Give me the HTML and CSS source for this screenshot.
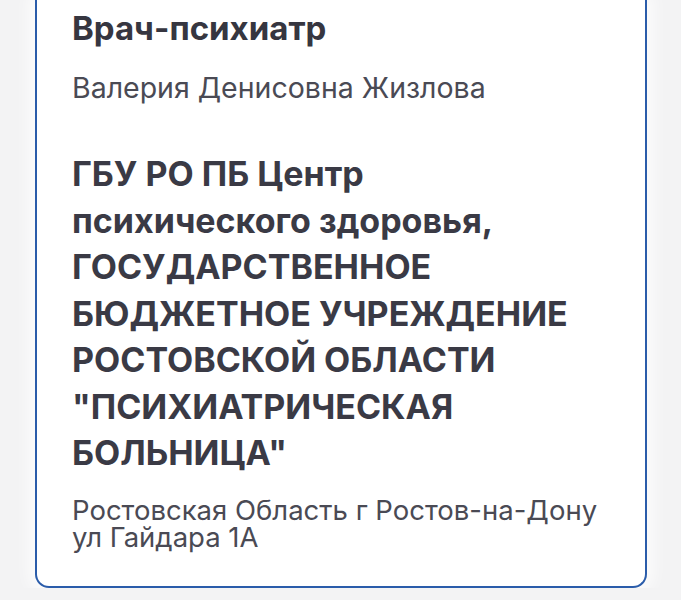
FILE: index.html
```html
<!DOCTYPE html>
<html lang="ru">
<head>
<meta charset="utf-8">
<link rel="stylesheet" href="styles.css">
</head>
<body>
<div class="page">
  <div class="card">
    <div class="title">Врач-психиатр</div>
    <div class="name">Валерия Денисовна Жизлова</div>
    <div class="org">ГБУ РО ПБ Центр психического здоровья, ГОСУДАРСТВЕННОЕ БЮДЖЕТНОЕ УЧРЕЖДЕНИЕ РОСТОВСКОЙ ОБЛАСТИ "ПСИХИАТРИЧЕСКАЯ БОЛЬНИЦА"</div>
    <div class="addr">Ростовская Область г Ростов-на-Дону ул Гайдара 1А</div>
  </div>
</div>
</body>
</html>
```
FILE: styles.css
```css
html, body {
  margin: 0;
  padding: 0;
  background: #f3f3f4;
}
.page {
  padding: 0 34px 0 35px;
  font-family: Inter, "Noto Sans", sans-serif;
}
.card {
  background: #fff;
  border: 2px solid #2a5caa;
  border-top: 0;
  border-radius: 0 0 14px 14px;
  padding: 8px 42px 35px 35px;
  box-shadow: 0 0 16px 6px rgba(255,255,255,0.8);
}
.title {
  font-size: 33px;
  font-weight: 700;
  color: #363640;
  line-height: 40px;
}
.name {
  font-size: 28.5px;
  color: #4a4a54;
  line-height: 32px;
  margin-top: 24px;
}
.org {
  font-size: 34px;
  font-weight: 700;
  color: #3a3a45;
  line-height: 46.5px;
  margin-top: 47px;
}
.addr {
  font-size: 27.5px;
  color: #4a4a54;
  line-height: 27px;
  margin-top: 20px;
}
```
